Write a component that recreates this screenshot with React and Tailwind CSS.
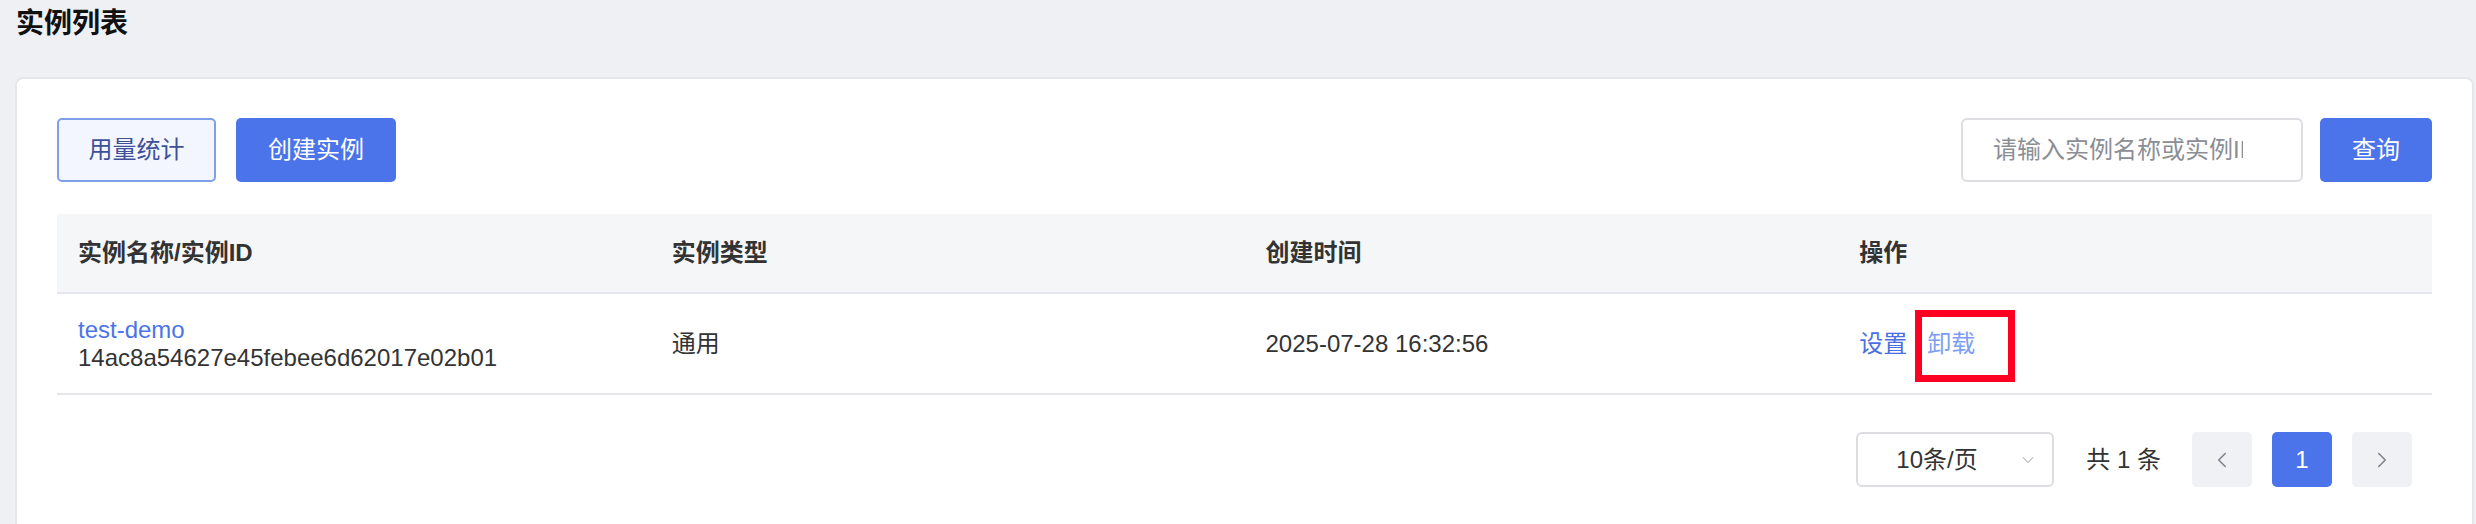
import { ChevronDown, ChevronLeft, ChevronRight } from 'lucide-react';

const font = { fontFamily: '"Liberation Sans", "Noto Sans CJK SC", sans-serif' };

const columns = ['实例名称/实例ID', '实例类型', '创建时间', '操作'];

const instances = [
  {
    id: '14ac8a54627e45febee6d62017e02b01',
    name: 'test-demo',
    type: '通用',
    createdAt: '2025-07-28 16:32:56',
  },
];

function Toolbar() {
  return (
    <div className="flex items-center justify-between h-[64px]">
      <div className="flex gap-[20px]">
        <button className="w-[159px] h-[64px] border-2 border-[#7f9fe8] bg-[#f3f6fe] rounded-[5px] text-[24px] text-[#3f5099]">
          用量统计
        </button>
        <button className="w-[160px] h-[64px] bg-[#4b74ea] rounded-[5px] text-[24px] text-white">
          创建实例
        </button>
      </div>
      <div className="flex gap-[17px]">
        <div className="w-[342px] h-[64px] border-2 border-[#dcdee2] rounded-[6px] pl-[30px] pr-[58px] flex items-center overflow-hidden">
          <span className="text-[24px] text-[#8b8e95] whitespace-nowrap overflow-hidden">请输入实例名称或实例ID</span>
        </div>
        <button className="w-[112px] h-[64px] bg-[#4b74ea] rounded-[5px] text-[24px] text-white">
          查询
        </button>
      </div>
    </div>
  );
}

function InstanceTable() {
  return (
    <div className="mt-[32px]">
      <div className="grid grid-cols-4 h-[80px] bg-[#f5f6f8] border-b-2 border-[#e4e6ec]">
        {columns.map((col) => (
          <div key={col} className="pl-[21px] flex items-center text-[24px] font-bold text-[#333]">
            {col}
          </div>
        ))}
      </div>
      {instances.map((row) => (
        <div key={row.id} className="grid grid-cols-4 h-[101px] border-b-2 border-[#e4e6ec] text-[24px] text-[#333]">
          <div className="pl-[21px] flex flex-col justify-center leading-[28px]">
            <span className="text-[#4b74ea]">{row.name}</span>
            <span>{row.id}</span>
          </div>
          <div className="pl-[21px] flex items-center">{row.type}</div>
          <div className="pl-[21px] flex items-center">{row.createdAt}</div>
          <div className="pl-[21px] flex items-center gap-[20px]">
            <span className="text-[#4b6fe2]">设置</span>
            <span className="text-[#7c9ef2]">卸载</span>
          </div>
        </div>
      ))}
    </div>
  );
}

function Pagination() {
  return (
    <div className="flex justify-end items-center mt-[37px] pr-[20px] text-[24px] text-[#333]">
      <div className="w-[198px] h-[55px] border-2 border-[#dcdde0] rounded-[6px] flex items-center pl-[38px] pr-[14px]">
        <span className="flex-1">10条/页</span>
        <ChevronDown className="w-[20px] h-[20px] text-[#999]" strokeWidth={1.2} />
      </div>
      <span className="ml-[32px] mr-[31px] whitespace-pre">共 1 条</span>
      <div className="flex gap-[20px]">
        <div className="w-[60px] h-[55px] rounded-[5px] bg-[#f0f1f4] flex items-center justify-center">
          <ChevronLeft className="w-[26px] h-[26px] text-[#80848f]" strokeWidth={1.5} />
        </div>
        <div className="w-[60px] h-[55px] rounded-[5px] bg-[#4b74ea] flex items-center justify-center text-white">
          1
        </div>
        <div className="w-[60px] h-[55px] rounded-[5px] bg-[#f0f1f4] flex items-center justify-center">
          <ChevronRight className="w-[26px] h-[26px] text-[#80848f]" strokeWidth={1.5} />
        </div>
      </div>
    </div>
  );
}

export default function App() {
  return (
    <div className="relative w-[2476px] h-[524px] bg-[#eef0f4] overflow-hidden" style={font}>
      <h1 className="h-[77px] pl-[16px] pt-[4px] text-[28px] leading-[40px] font-bold text-[#111]">实例列表</h1>
      <div className="ml-[15px] w-[2459px] h-[460px] bg-white border-2 border-[#e4e6eb] rounded-[8px] px-[40px] pt-[39px]">
        <Toolbar />
        <InstanceTable />
        <Pagination />
      </div>
      {/* 标注框 */}
      <div className="absolute left-[1915px] top-[310px] w-[100px] h-[72px] border-[7px] border-[#ff0022]" />
    </div>
  );
}
